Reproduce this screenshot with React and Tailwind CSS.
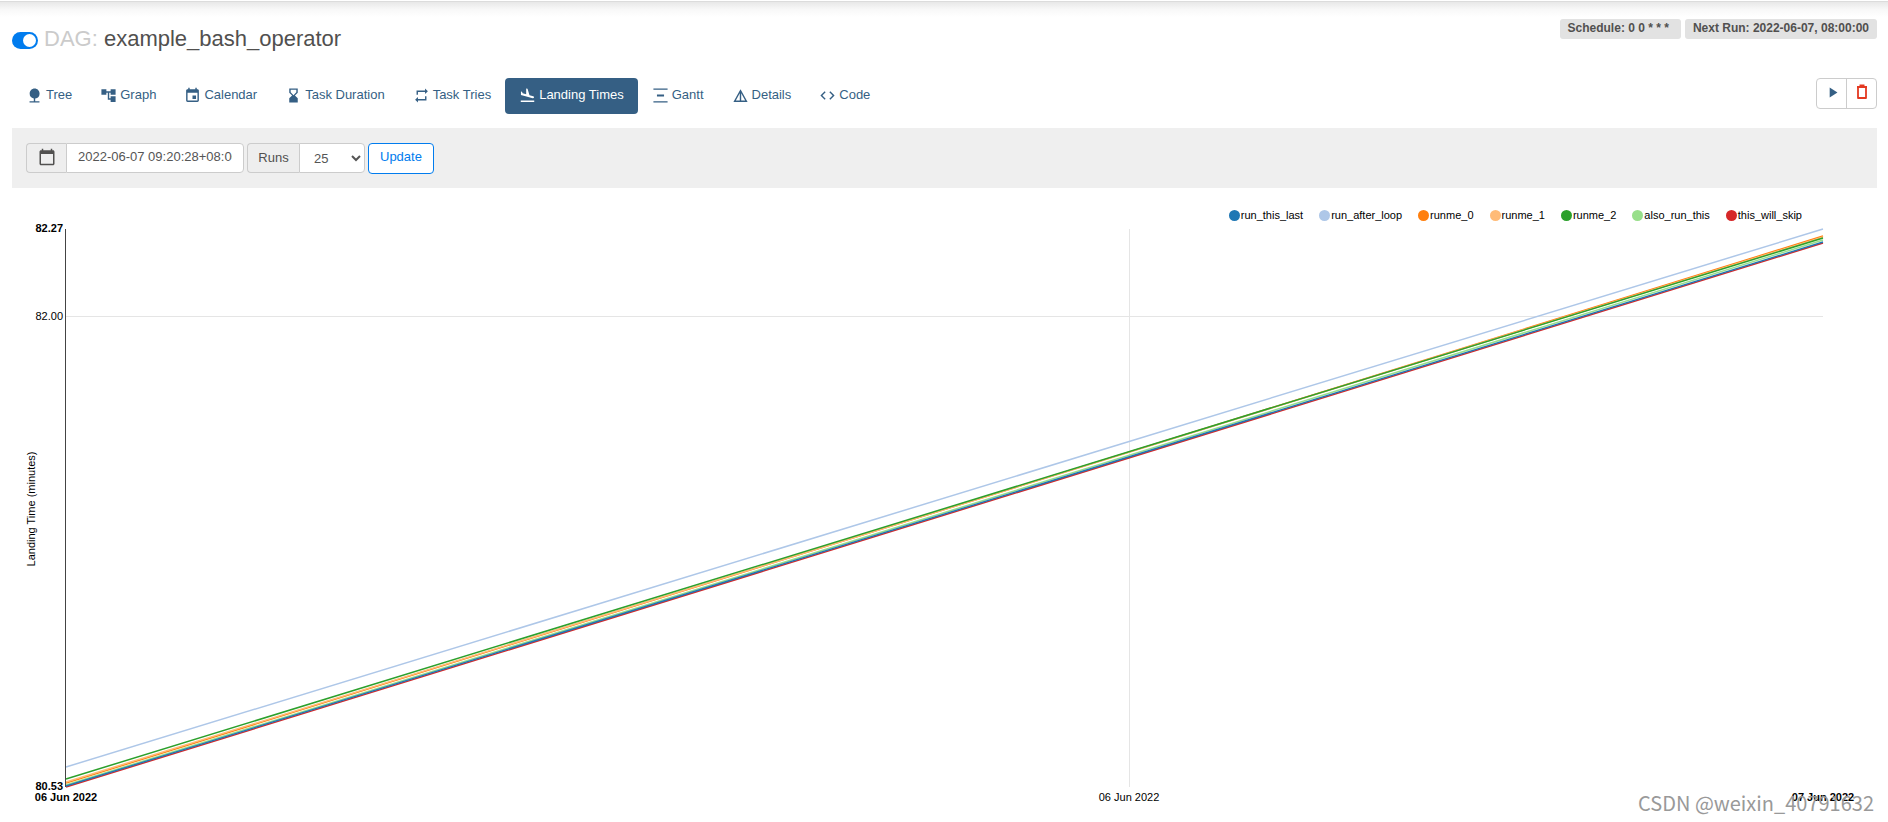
import React, { useState } from "react";
import {
  MdNature,
  MdAccountTree,
  MdEvent,
  MdHourglassBottom,
  MdRepeat,
  MdFlightLand,
  MdVerticalDistribute,
  MdDetails,
  MdCode,
  MdPlayArrow,
  MdCalendarToday,
} from "react-icons/md";

const tabs = [
  { label: "Tree", icon: MdNature },
  { label: "Graph", icon: MdAccountTree },
  { label: "Calendar", icon: MdEvent },
  { label: "Task Duration", icon: MdHourglassBottom },
  { label: "Task Tries", icon: MdRepeat },
  { label: "Landing Times", icon: MdFlightLand, active: true },
  { label: "Gantt", icon: MdVerticalDistribute },
  { label: "Details", icon: MdDetails },
  { label: "Code", icon: MdCode },
];

// Each series runs from its first landing time (y1) to its last (y2).
const series = [
  { name: "run_this_last", color: "#1f77b4", y1: 576, y2: 32 },
  { name: "run_after_loop", color: "#aec7e8", y1: 557, y2: 19 },
  { name: "runme_0", color: "#ff7f0e", y1: 573, y2: 26 },
  { name: "runme_1", color: "#ffbb78", y1: 572, y2: 27 },
  { name: "runme_2", color: "#2ca02c", y1: 569, y2: 28 },
  { name: "also_run_this", color: "#98df8a", y1: 575, y2: 30 },
  { name: "this_will_skip", color: "#d62728", y1: 577, y2: 33 },
];
const drawOrder = [2, 3, 5, 6, 0, 4, 1];

function Header() {
  const [on, setOn] = useState(true);
  return (
    <div className="flex items-start justify-between">
      <div className="flex items-center gap-[6px] pt-2">
        <label className="relative mt-[3px] flex cursor-pointer">
          <input
            type="checkbox"
            aria-label="Pause/Unpause DAG"
            checked={on}
            onChange={() => setOn(!on)}
            className="peer h-[17px] w-[26px] appearance-none rounded-full bg-gray-400 checked:bg-[#017cee]"
          />
          <span className="absolute top-[2px] left-[2px] size-[13px] rounded-full bg-white peer-checked:left-[11px]" />
        </label>
        <h1 className="text-[22px] leading-[26px]">
          <span className="text-[#cbcbcb]">DAG:</span> example_bash_operator
        </h1>
      </div>
      <div className="flex gap-1 pt-px text-xs font-bold">
        <span className="h-5 rounded-[3px] bg-[#e2e2e2] pr-3 pl-2 leading-[18px]">Schedule: 0 0 * * *</span>
        <span className="h-5 rounded-[3px] bg-[#e2e2e2] px-2 leading-[18px]">Next Run: 2022-06-07, 08:00:00</span>
      </div>
    </div>
  );
}

function TrashIcon() {
  return (
    <svg className="size-[18px] text-[#e43921]" viewBox="0 0 18 18" fill="none" stroke="currentColor" strokeWidth="2">
      <path d="M4 4H14M6.500 2.500H11.500" />
      <path d="M5 5V15H13V5" strokeWidth="1.8" strokeLinejoin="round" />
    </svg>
  );
}

function Nav() {
  return (
    <div className="mt-[26px] flex items-start justify-between">
      <nav className="flex">
        {tabs.map(({ label, icon: Icon, active }) => (
          <a
            key={label}
            href="#"
            className={
              active
                ? "flex h-9 items-center gap-[3px] rounded bg-[#355f84] px-[14px] pb-[3px] text-[13px] text-white"
                : "flex h-9 items-center gap-[3px] rounded px-[14px] pb-[3px] text-[13px] text-[#355f84]"
            }
          >
            <Icon className="mt-px size-[17px]" />
            {label}
          </a>
        ))}
      </nav>
      <div className="flex h-[31px] rounded border border-[#ccc]">
        <button aria-label="Trigger DAG" className="flex w-[30px] justify-center border-r border-[#ccc] pt-[5px] pl-[2px]">
          <MdPlayArrow className="size-[17px] text-[#355f84]" />
        </button>
        <button aria-label="Delete DAG" className="flex w-[29px] justify-center pt-1">
          <TrashIcon />
        </button>
      </div>
    </div>
  );
}

function Filters() {
  return (
    <form className="mt-[14px] flex items-start gap-[3px] bg-[#efefef] px-[14px] pt-[15px] pb-[14px] text-[13px]" onSubmit={(e) => e.preventDefault()}>
      <div className="flex h-[30px]">
        <label htmlFor="base-date" aria-label="Base date" className="flex w-10 items-center justify-center rounded-l border border-r-0 border-[#ccc] bg-[#eee] pb-[2px]">
          <MdCalendarToday className="size-[18px]" />
        </label>
        <input
          id="base-date"
          type="text"
          defaultValue="2022-06-07 09:20:28+08:00"
          className="w-[178px] rounded-r border border-[#ccc] bg-white px-[11px] pb-[2px] text-[#555]"
        />
      </div>
      <div className="flex h-[30px]">
        <label htmlFor="runs" className="flex w-[52px] items-center justify-center rounded-l border border-r-0 border-[#ccc] bg-[#eee]">
          Runs
        </label>
        <select id="runs" defaultValue="25" className="w-[66px] rounded-r border border-[#ccc] bg-white pl-[10px] text-[#555]">
          <option>5</option>
          <option>25</option>
          <option>50</option>
          <option>100</option>
        </select>
      </div>
      <button className="h-[31px] rounded border border-[#017cee] bg-white px-[11px] pb-[3px] text-[#017cee]">Update</button>
    </form>
  );
}

function Chart() {
  return (
    <section className="mt-[21px]" aria-label="Landing times">
      <ul className="flex justify-end gap-4 pr-[75px] text-[11px] leading-3 text-black">
        {series.map((s) => (
          <li key={s.name} className="flex items-center gap-px">
            <svg className="size-[11px]" viewBox="0 0 11 11">
              <circle cx="5.5" cy="5.5" r="5.5" fill={s.color} />
            </svg>
            {s.name}
          </li>
        ))}
      </ul>
      <svg className="-mt-[11px] block h-auto w-full" viewBox="0 0 1865 602" fontSize="11" fill="#000">
        <path d="M54 106.500H1811M1117.500 19V577" stroke="#e5e5e5" fill="none" />
        {drawOrder.map((i) => (
          <line key={i} x1="54" y1={series[i].y1} x2="1811" y2={series[i].y2} stroke={series[i].color} strokeWidth="1.5" />
        ))}
        <path d="M53.500 19V577" stroke="#444" fill="none" />
        <g textAnchor="end">
          <text x="51" y="22" fontWeight="bold">82.27</text>
          <text x="51" y="110">82.00</text>
          <text x="51" y="580" fontWeight="bold">80.53</text>
        </g>
        <g textAnchor="middle">
          <text x="54" y="591" fontWeight="bold">06 Jun 2022</text>
          <text x="1117" y="591">06 Jun 2022</text>
          <text x="1811" y="591" fontWeight="bold">07 Jun 2022</text>
          <text transform="translate(23 299) rotate(-90)">Landing Time (minutes)</text>
        </g>
      </svg>
    </section>
  );
}

export default function App() {
  return (
    <div className="relative min-h-screen overflow-hidden bg-white font-['Liberation_Sans',Arial,sans-serif] text-[#51504f]">
      <div className="h-[18px] border-t border-white">
        <div className="h-4 border-t border-[#dcdcdc] bg-linear-to-b from-[#e8e8e8] via-[#f8f8f8] to-white" />
      </div>
      <main className="pr-[11px] pl-3">
        <Header />
        <Nav />
        <Filters />
        <Chart />
      </main>
      <div className="absolute right-[14px] bottom-[7px] font-['Noto_Sans_CJK_SC',sans-serif] text-[20px] leading-6 text-[#999]">
        CSDN @weixin_40791632
      </div>
    </div>
  );
}
